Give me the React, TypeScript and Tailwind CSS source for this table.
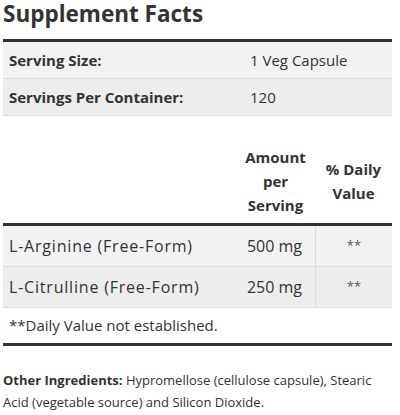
export default function App() {
  const font = { fontFamily: '"Open Sans", "Liberation Sans", sans-serif' };
  return (
    <div className="w-[400px] h-[415px] bg-white text-[#333] overflow-hidden" style={font}>
      <div className="px-[3px]">
        <h2 className="text-[22.5px] leading-[28px] font-bold text-[#333]">Supplement Facts</h2>

        {/* serving info */}
        <div className="mt-[11px] w-[389px] border-t-[3px] border-[#333]">
          <div className="grid grid-cols-[241px_148px] bg-[#f2f2f2] border-b border-[#dcdcdc] h-[37px] items-center text-[15px]">
            <div className="pl-[6px] font-bold">Serving Size:</div>
            <div className="pl-[6px]">1 Veg Capsule</div>
          </div>
          <div className="grid grid-cols-[241px_148px] bg-[#ededed] border-b border-[#dcdcdc] h-[37px] items-center text-[15px]">
            <div className="pl-[6px] font-bold">Servings Per Container:</div>
            <div className="pl-[6px]">120</div>
          </div>
        </div>

        {/* ingredients */}
        <div className="mt-[29px] w-[389px]">
          <div className="grid grid-cols-[241px_71px_77px] items-center text-[15px] font-bold leading-[24px] pb-[6px]">
            <div></div>
            <div className="text-center pr-[8px]">Amount per Serving</div>
            <div className="text-center">% Daily Value</div>
          </div>
          <div className="border-t-[3px] border-[#333]">
            <div className="grid grid-cols-[241px_71px_77px] bg-[#f2f2f2] border-b border-[#dcdcdc] h-[41px] items-center text-[16px]">
              <div className="pl-[6px] tracking-[0.8px]">L-Arginine (Free-Form)</div>
              <div className="pr-[13px] h-full flex items-center justify-end">500 mg</div>
              <div className="border-l border-[#dcdcdc] h-full flex items-center justify-center text-[13px] text-[#555]">**</div>
            </div>
            <div className="grid grid-cols-[241px_71px_77px] bg-[#ededed] border-b border-[#dcdcdc] h-[41px] items-center text-[16px]">
              <div className="pl-[6px] tracking-[0.8px]">L-Citrulline (Free-Form)</div>
              <div className="pr-[13px] h-full flex items-center justify-end">250 mg</div>
              <div className="border-l border-[#dcdcdc] h-full flex items-center justify-center text-[13px] text-[#555]">**</div>
            </div>
          </div>
          <div className="pl-[6px] h-[38px] flex items-center text-[15px] border-b-[3px] border-[#333]">
            **Daily Value not established.
          </div>
        </div>

        <p className="mt-[23px] text-[13px] leading-[22px] text-[#333]">
          <span className="font-bold">Other Ingredients:</span> Hypromellose (cellulose capsule), Stearic Acid (vegetable source) and Silicon Dioxide.
        </p>
      </div>
    </div>
  );
}
